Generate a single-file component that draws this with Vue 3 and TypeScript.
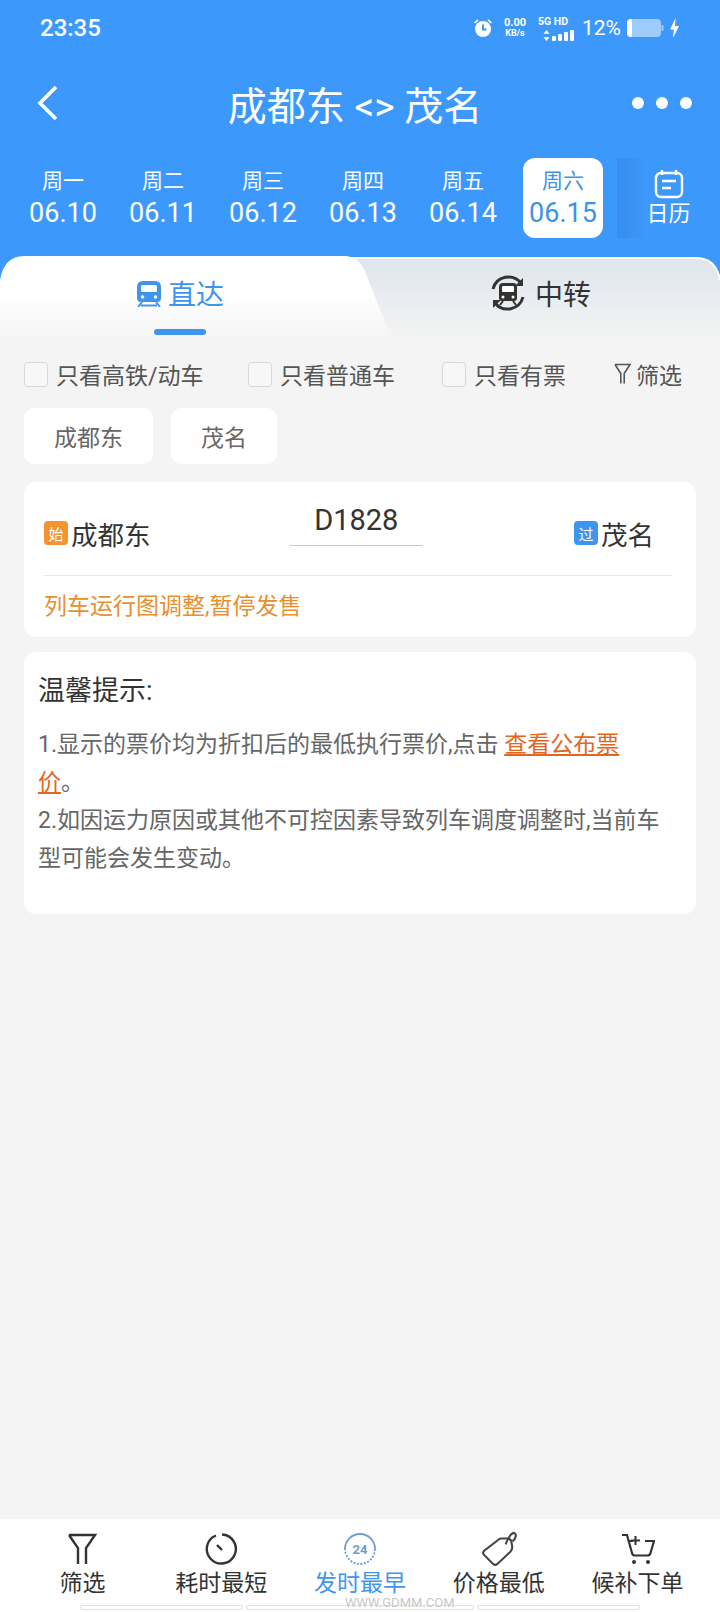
<script setup lang="ts">
interface DayItem { week: string; date: string; active?: boolean }

const days: DayItem[] = [
  { week: '周一', date: '06.10' },
  { week: '周二', date: '06.11' },
  { week: '周三', date: '06.12' },
  { week: '周四', date: '06.13' },
  { week: '周五', date: '06.14' },
  { week: '周六', date: '06.15', active: true },
]
const filters = ['只看高铁/动车', '只看普通车', '只看有票']
const stations = ['成都东', '茂名']
</script>

<template>
  <div class="page">
    <header class="top">
      <div class="status">
        <span class="time">23:35</span>
        <div class="status-right">
          <svg class="alarm" width="20" height="20" viewBox="0 0 20 20">
            <circle cx="10" cy="11" r="8" fill="#fff" />
            <path d="M1.5 5 5 1.8M18.500 5 15 1.800" stroke="#fff" stroke-width="1.600" fill="none" />
            <path d="M10 6.500V11.500H13.500" stroke="#3d98fb" stroke-width="2" fill="none" />
          </svg>
          <div class="speed"><b>0.00</b><i>KB/s</i></div>
          <div class="net">
            <b>5G HD</b>
            <svg width="32" height="11" viewBox="0 0 32 11">
              <path d="M3.500 0 6.500 3.800H.5ZM3.500 11 .5 7.200H6.500Z" fill="#fff" />
              <rect x="9" y="6" width="4" height="5" rx="1" fill="#fff" />
              <rect x="15" y="4" width="4" height="7" rx="1" fill="#fff" />
              <rect x="21" y="2" width="4" height="9" rx="1" fill="#fff" />
              <rect x="27" y="0" width="4" height="11" rx="1" fill="#fff" />
            </svg>
          </div>
          <span class="pct">12%</span>
          <svg width="37" height="20" viewBox="0 0 37 20">
            <rect x="0" y="1" width="34" height="18" rx="4" fill="#fff" fill-opacity=".5" />
            <path d="M4 1H5V19H4A4 4 0 0 1 0 15V5A4 4 0 0 1 4 1Z" fill="#fff" />
            <rect x="34.500" y="7" width="2" height="6" rx="1" fill="#fff" fill-opacity=".5" />
          </svg>
          <svg width="11" height="20" viewBox="0 0 11 20">
            <path d="M6.500 0 1 11.500H4.800L4 20 10 8H6Z" fill="#fff" />
          </svg>
        </div>
      </div>

      <div class="nav">
        <svg width="24" height="36" viewBox="0 0 24 36">
          <path d="M20 2 4 18 20 34" fill="none" stroke="#fff" stroke-width="3.600" />
        </svg>
        <h1>成都东 &lt;&gt; 茂名</h1>
        <div class="dots"><i /><i /><i /></div>
      </div>

      <div class="days">
        <div v-for="d in days" :key="d.date" class="day" :class="{ active: d.active }">
          <span class="week">{{ d.week }}</span>
          <span class="date">{{ d.date }}</span>
        </div>
        <div class="calendar">
          <svg width="30" height="30" viewBox="0 0 30 30">
            <rect x="2" y="4" width="26" height="24" rx="5" fill="none" stroke="#fff" stroke-width="2.400" />
            <path d="M8 1V6M22 1V6M8 12H22M8 19H17" stroke="#fff" stroke-width="2.400" fill="none" />
          </svg>
          <span>日历</span>
        </div>
      </div>
    </header>

    <div class="tabs">
      <svg class="tab-bg" width="720" height="84" viewBox="0 0 720 84" preserveAspectRatio="none">
        <defs>
          <linearGradient id="tabRight" x1="0" y1="0" x2="0" y2="1">
            <stop offset="0" stop-color="#dfe5ec" />
            <stop offset="1" stop-color="#f4f4f4" />
          </linearGradient>
          <linearGradient id="tabLeft" x1="0" y1="0" x2="0" y2="1">
            <stop offset="0.45" stop-color="#ffffff" />
            <stop offset="1" stop-color="#f4f4f4" />
          </linearGradient>
        </defs>
        <path d="M340 2H696Q716 2 720 24V84H340Z" fill="url(#tabRight)" />
        <path d="M340 2H696Q716 2 720 24" fill="none" stroke="#fff" stroke-width="2" />
        <path d="M0 24Q4 0 24 0H344Q360 0 366 18L392 84H0Z" fill="url(#tabLeft)" />
      </svg>
      <div class="tab current">
        <svg width="26" height="27" viewBox="0 0 26 27">
          <path d="M7 1H19Q25 1 25 7V18Q25 22 21 22H5Q1 22 1 18V7Q1 1 7 1Z" fill="#3f95ee" />
          <rect x="5" y="5" width="16" height="7" rx="1.500" fill="#fff" />
          <circle cx="6.500" cy="17" r="1.800" fill="#fff" />
          <circle cx="19.500" cy="17" r="1.800" fill="#fff" />
          <path d="M6 22 2 27M20 22 24 27M5 25.500H21" stroke="#3f95ee" stroke-width="2" fill="none" />
        </svg>
        <span>直达</span>
        <i class="indicator" />
      </div>
      <div class="tab">
        <svg width="38" height="38" viewBox="0 0 38 38">
          <path d="M4 15A16 16 0 0 1 32 9M34 23A16 16 0 0 1 6 29" fill="none" stroke="#333" stroke-width="3" />
          <path d="M34 4V12H26ZM4 34V26H12Z" fill="#333" />
          <path d="M14 9H24Q28 9 28 13V24Q28 27 25 27H13Q10 27 10 24V13Q10 9 14 9Z" fill="#333" />
          <rect x="13" y="12" width="12" height="6" rx="1" fill="#fff" />
          <circle cx="14" cy="23" r="1.500" fill="#fff" />
          <circle cx="24" cy="23" r="1.500" fill="#fff" />
          <path d="M14 27 11 31M24 27 27 31" stroke="#333" stroke-width="2" />
        </svg>
        <span>中转</span>
      </div>
    </div>

    <main class="content">
      <div class="filters">
        <label v-for="f in filters" :key="f" class="check"><i class="box" />{{ f }}</label>
        <div class="filter-btn">
          <svg width="17" height="22" viewBox="0 0 17 22">
            <path d="M1 1.500H16L10.200 10.500V20.500M6.800 20.500V10.500L1 1.500" fill="none" stroke="#555" stroke-width="1.600" />
          </svg>
          筛选
        </div>
      </div>

      <div class="chips">
        <span v-for="s in stations" :key="s" class="chip">{{ s }}</span>
      </div>

      <section class="card train">
        <div class="route">
          <div class="station"><i class="tag start">始</i>成都东</div>
          <div class="number"><strong>D1828</strong><i class="rule" /></div>
          <div class="station"><i class="tag pass">过</i>茂名</div>
        </div>
        <p class="notice">列车运行图调整,暂停发售</p>
      </section>

      <section class="card tips">
        <h2>温馨提示:</h2>
        <p>
          1.显示的票价均为折扣后的最低执行票价,点击 <a>查看公布票<br />价</a>。<br />
          2.如因运力原因或其他不可控因素导致列车调度调整时,当前车型可能会发生变动。
        </p>
      </section>
    </main>

    <footer class="bar">
      <div class="bar-item first">
        <svg width="30" height="32" viewBox="0 0 30 32">
          <path d="M2 2H28L19 15V31M11 31V15L2 2" fill="none" stroke="#333" stroke-width="2.400" />
        </svg>
        <span>筛选</span>
      </div>
      <div class="bar-item">
        <svg width="34" height="34" viewBox="0 0 34 34">
          <path d="M12 3.500A14.500 14.500 0 1 0 18 2.500" fill="none" stroke="#333" stroke-width="2.400" />
          <path d="M13 13 18 18" stroke="#333" stroke-width="2.400" />
        </svg>
        <span>耗时最短</span>
      </div>
      <div class="bar-item on">
        <svg width="34" height="34" viewBox="0 0 34 34">
          <path d="M17 2A15 15 0 0 1 32 17" fill="none" stroke="#6f9ad8" stroke-width="1.800" />
          <path d="M2 17A15 15 0 0 1 17 2" fill="none" stroke="#6f9ad8" stroke-width="1.800" />
          <path d="M32 17A15 15 0 0 1 2 17" fill="none" stroke="#6f9ad8" stroke-width="1.800" stroke-dasharray="2 1.500" />
          <text x="17" y="21.500" text-anchor="middle" class="clock-num">24</text>
        </svg>
        <span>发时最早</span>
      </div>
      <div class="bar-item">
        <svg width="38" height="38" viewBox="0 0 38 38">
          <path d="M21 8H28Q31 8 32 11L33 17Q33 20 31 22L17 35Q15 36.500 13 35L3 25Q1.500 23 3 21L18 9.500Q19.500 8 21 8Z" fill="none" stroke="#444" stroke-width="2.200" />
          <path d="M26 14C28 9 31 2 35 2C38 3 37 8 33 11" fill="none" stroke="#444" stroke-width="2.200" />
        </svg>
        <span>价格最低</span>
      </div>
      <div class="bar-item">
        <svg width="34" height="32" viewBox="0 0 34 32">
          <path d="M1 2H6L11 20Q11.500 22.500 14 22.500H26Q29 22.500 29.500 20L33 8H24" fill="none" stroke="#333" stroke-width="2.200" />
          <path d="M8 8H12M14.500 3V12M10 7.500H19" stroke="#333" stroke-width="2" fill="none" />
          <circle cx="13" cy="29" r="2" fill="#333" />
          <circle cx="27" cy="29" r="2" fill="#333" />
        </svg>
        <span>候补下单</span>
      </div>

      <div class="handles"><i /><i /><i /></div>
      <span class="site">WWW.GDMM.COM</span>
    </footer>
  </div>
</template>

<style>
html, body { background: #f4f4f4; }
</style>

<style scoped>
.page {
  width: 720px; height: 1612px; display: flex; flex-direction: column; overflow: hidden;
  background: #f4f4f4; font-family: Roboto, "Noto Sans CJK SC", sans-serif; color: #333;
}
i { font-style: normal; }

.top { background: #3d98fb; color: #fff; height: 258px; flex: none; padding: 0 0 0 0; }
.status { height: 56px; padding: 0 40px; display: flex; align-items: center; justify-content: space-between; }
.time { font-size: 24px; font-weight: 500; }
.status-right { display: flex; align-items: center; margin-right: 0; }
.alarm { margin-right: 11px; }
.speed { display: flex; flex-direction: column; align-items: center; line-height: 11px; margin-right: 12px; }
.speed b { font-size: 11px; font-weight: 700; }
.speed i { font-size: 9px; font-weight: 700; }
.net { display: flex; flex-direction: column; line-height: 12px; gap: 2px; margin-right: 7px; }
.net b { font-size: 10.500px; font-weight: 700; white-space: nowrap; }
.pct { font-size: 21px; margin-right: 6px; }
.status-right svg:last-child { margin-left: 5px; }

.nav { height: 72px; padding: 0 28px 0 36px; margin-top: 11px; display: flex; align-items: center; justify-content: space-between; }
.nav h1 { margin: 0 0 0 18px; font-size: 39px; font-weight: 400; letter-spacing: 0; }
.dots { display: flex; gap: 12px; }
.dots i { width: 12px; height: 12px; border-radius: 50%; background: #fff; }

.days { display: flex; padding-left: 13px; margin-top: 19px; }
.day { width: 100px; height: 80px; display: flex; flex-direction: column; align-items: center; justify-content: center; }
.day .week { font-size: 21px; line-height: 30px; }
.day .date { font-size: 27px; line-height: 34px; }
.day.active {
  width: 80px; margin: 0 10px; background: #fff; color: #3d93e8; border-radius: 12px;
}
.calendar {
  flex: 1; margin-left: 4px; height: 80px; display: flex; flex-direction: column; align-items: center; justify-content: center;
  background: linear-gradient(90deg, rgba(40, 120, 210, .3), rgba(61, 152, 251, 0) 30%);
}
.calendar span { font-size: 22px; line-height: 30px; }
.calendar svg { margin-top: 2px; }

.tabs { position: relative; height: 84px; flex: none; display: flex; margin-top: -2px; background: #3d98fb; }
.tab-bg { position: absolute; left: 0; top: 0; }
.tab { position: relative; width: 360px; display: flex; align-items: center; justify-content: center; gap: 8px; font-size: 28px; padding-bottom: 26px; padding-top: 16px; box-sizing: border-box; height: 84px; }
.tab.current { color: #3f95ee; gap: 6px; }
.indicator { position: absolute; left: 154px; top: 73px; width: 52px; height: 6px; border-radius: 3px; background: #3f95ee; }

.content { flex: 1; padding: 0 24px; min-height: 0; }
.filters { height: 68px; display: flex; align-items: center; font-size: 23px; color: #555; }
.check { display: flex; align-items: center; }
.check:nth-child(1) { width: 224px; }
.check:nth-child(2) { width: 194px; }
.check:nth-child(3) { width: 172px; }
.box { width: 24px; height: 25px; box-sizing: border-box; margin-right: 8px; border: 1.500px solid #d8d8d8; border-radius: 4px; background: #f7f7f7; }
.filter-btn { display: flex; align-items: center; gap: 5px; }

.chips { display: flex; gap: 18px; margin-top: 0; }
.chip { height: 56px; padding: 0 30px; display: flex; align-items: center; background: #fff; border-radius: 10px; font-size: 23px; color: #666; }

.card { background: #fff; border-radius: 12px; }
.train { margin-top: 18px; height: 155px; padding: 0 24px 0 20px; box-sizing: border-box; }
.route { height: 93px; display: flex; align-items: center; justify-content: space-between; border-bottom: 1px solid #e6e6e6; }
.station { display: flex; align-items: center; gap: 3px; font-size: 26.500px; color: #333; margin-top: 9px; }
.tag { width: 24px; height: 24px; border-radius: 4px; color: #fff; font-size: 15px; display: flex; align-items: center; justify-content: center; }
.tag.start { background: #f39332; }
.tag.pass { background: #3f95ee; }
.station:last-child { margin-right: 18px; }
.number { width: 133px; display: flex; flex-direction: column; align-items: center; margin-left: -12px; margin-top: -10px; }
.number strong { font-size: 29px; font-weight: 400; line-height: 38px; }
.rule { width: 133px; height: 1px; margin-top: 6px; background: #c9c9c9; }
.notice { margin: 0; font-size: 23px; line-height: 62px; color: #e88f2f; }

.tips { margin-top: 15px; height: 262px; padding: 20px 14px; box-sizing: border-box; }
.tips h2 { margin: 0; font-size: 27px; font-weight: 400; line-height: 38px; }
.tips p { margin: 16px 0 0; font-size: 23px; line-height: 38px; color: #666; }
.tips a { color: #e2661f; text-decoration: underline; }

.bar { position: relative; flex: none; height: 93px; background: #fff; display: flex; padding: 0 13px; }
.bar-item { flex: 1; display: flex; flex-direction: column; align-items: center; font-size: 23px; color: #333; padding-top: 12px; }
.bar-item svg { height: 36px; flex: none; }
.bar-item span { line-height: 30px; margin-top: 2px; white-space: nowrap; }
.bar-item.on span { color: #3f95ee; }
.clock-num { font-size: 13px; font-weight: 700; fill: #6f9ad8; font-family: Roboto, sans-serif; }

.handles { position: absolute; left: 80px; top: 86px; display: flex; gap: 3px; }
.handles i { height: 5px; box-sizing: border-box; border: 1px solid #e2e2e2; border-radius: 2px; }
.handles i:nth-child(1) { width: 163px; }
.handles i:nth-child(2) { width: 228px; }
.handles i:nth-child(3) { width: 163px; }
.site { position: absolute; left: 345px; top: 76px; font-size: 13px; line-height: 16px; color: #c8c8c8; }
</style>
